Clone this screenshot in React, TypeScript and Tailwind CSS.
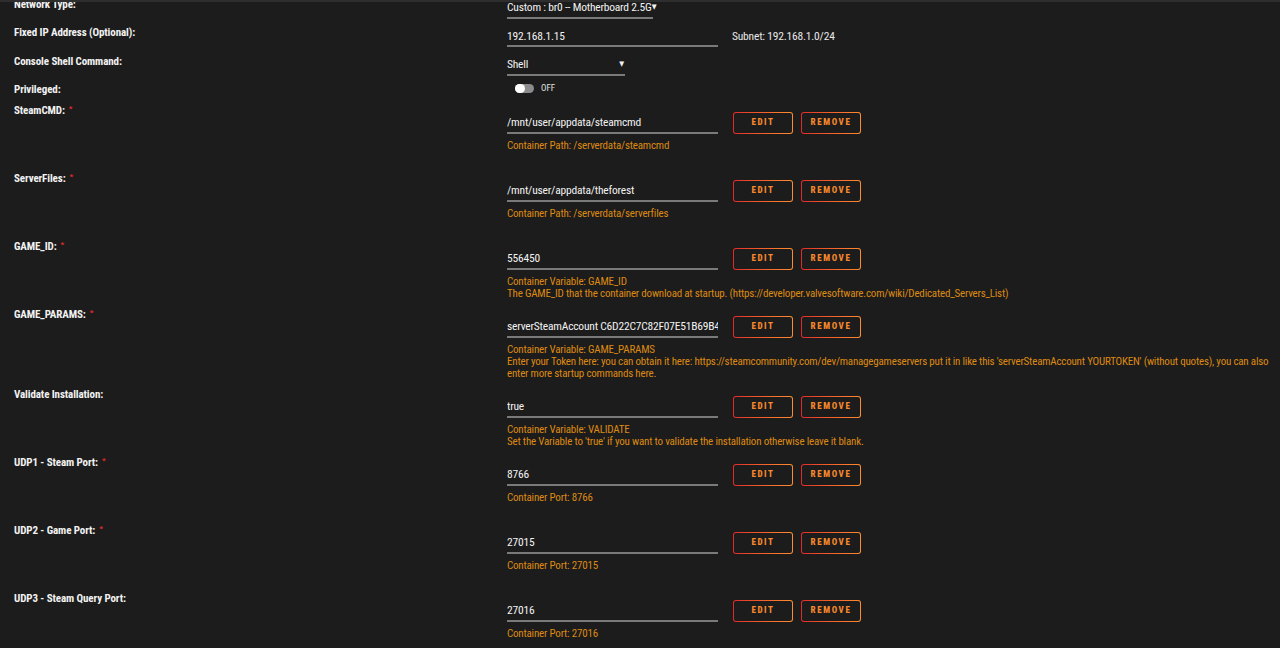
import React from "react";

type Row = {
  label: string;
  req: boolean;
  value: string;
  desc: string[];
};

const rows: Row[] = [
  { label: "SteamCMD:", req: true, value: "/mnt/user/appdata/steamcmd", desc: ["Container Path: /serverdata/steamcmd"] },
  { label: "ServerFiles:", req: true, value: "/mnt/user/appdata/theforest", desc: ["Container Path: /serverdata/serverfiles"] },
  {
    label: "GAME_ID:",
    req: true,
    value: "556450",
    desc: [
      "Container Variable: GAME_ID",
      "The GAME_ID that the container download at startup. (https://developer.valvesoftware.com/wiki/Dedicated_Servers_List)",
    ],
  },
  {
    label: "GAME_PARAMS:",
    req: true,
    value: "serverSteamAccount C6D22C7C82F07E51B69B4F3A1D5E9C27",
    desc: [
      "Container Variable: GAME_PARAMS",
      "Enter your Token here: you can obtain it here: https://steamcommunity.com/dev/managegameservers put it in like this 'serverSteamAccount YOURTOKEN' (without quotes), you can also enter more startup commands here.",
    ],
  },
  {
    label: "Validate Installation:",
    req: false,
    value: "true",
    desc: [
      "Container Variable: VALIDATE",
      "Set the Variable to 'true' if you want to validate the installation otherwise leave it blank.",
    ],
  },
  { label: "UDP1 - Steam Port:", req: true, value: "8766", desc: ["Container Port: 8766"] },
  { label: "UDP2 - Game Port:", req: true, value: "27015", desc: ["Container Port: 27015"] },
  { label: "UDP3 - Steam Query Port:", req: false, value: "27016", desc: ["Container Port: 27016"] },
];

function Label({ text, req }: { text: string; req?: boolean }) {
  return (
    <div className="w-[507px] flex-none pl-[14px] text-[11px] leading-[12px] font-bold tracking-[-0.1px] text-[#f2f2f2]">
      {text}
      {req && <span className="ml-[4px] align-top text-[8px] leading-[8px] text-[#e22828]">*</span>}
    </div>
  );
}

function Btn({ text }: { text: string }) {
  return (
    <div className="h-[22px] w-[60px] rounded-[3px] bg-gradient-to-r from-[#e22828] to-[#ff8c2f] p-px">
      <div className="flex h-full w-full items-center justify-center rounded-[2px] bg-[#1c1c1c] text-[9px] font-extrabold tracking-[1.6px] text-[#f7882c]">
        {text}
      </div>
    </div>
  );
}

function ConfigRow({ r }: { r: Row }) {
  return (
    <div className="flex pb-[9px]">
      <Label text={r.label} req={r.req} />
      <div className="flex-1 pr-[6px]">
        <div className="mt-[7px] flex items-start">
          <div className="w-[211px] overflow-hidden whitespace-nowrap border-b-2 border-[#7a7a7a] pt-[4px] pb-[4px] text-[11.5px] leading-[12px] tracking-[-0.2px] text-[#f2f2f2]">
            {r.value}
          </div>
          <div className="ml-[15px] flex gap-[8px]">
            <Btn text="EDIT" />
            <Btn text="REMOVE" />
          </div>
        </div>
        <div className="mt-[6px] min-h-[24px] text-[11px] leading-[12px] tracking-[-0.2px] text-[#dc8a12]">
          {r.desc.map((d, i) => (
            <div key={i}>{d}</div>
          ))}
        </div>
      </div>
    </div>
  );
}

export default function App() {
  return (
    <div className="h-[648px] w-[1280px] overflow-hidden border-t-2 border-[#2e2e2e] bg-[#1c1c1c] [font-family:'Liberation_Sans_Narrow','Roboto_Condensed','DejaVu_Sans_Condensed',sans-serif]">
      <div className="-mt-[3px]">
        {/* Network Type */}
        <div className="flex h-[28px] items-start">
          <Label text="Network Type:" />
          <div className="pt-[2px]">
            <div className="flex w-[146px] items-center justify-between whitespace-nowrap border-b-2 border-[#7a7a7a] pb-[4px] text-[11.5px] leading-[12px] tracking-[-0.2px] text-[#f2f2f2]">
              <span>Custom : br0 -- Motherboard 2.5G</span>
              <span className="text-[7px]">▼</span>
            </div>
          </div>
        </div>
        {/* Fixed IP */}
        <div className="flex h-[29px] items-start">
          <Label text="Fixed IP Address (Optional):" />
          <div className="flex items-start pt-[3px]">
            <div className="w-[211px] border-b-2 border-[#7a7a7a] pb-[3px] text-[11.5px] leading-[12px] tracking-[-0.2px] text-[#f2f2f2]">
              192.168.1.15
            </div>
            <div className="ml-[14px] text-[11.5px] leading-[12px] tracking-[-0.2px] text-[#e8e8e8]">Subnet: 192.168.1.0/24</div>
          </div>
        </div>
        {/* Console Shell */}
        <div className="flex h-[28px] items-start">
          <Label text="Console Shell Command:" />
          <div className="pt-[2px]">
            <div className="flex w-[118px] items-center justify-between border-b-2 border-[#7a7a7a] pb-[4px] text-[11.5px] leading-[12px] tracking-[-0.2px] text-[#f2f2f2]">
              <span>Shell</span>
              <span className="pr-[1px] text-[7px]">▼</span>
            </div>
          </div>
        </div>
        {/* Privileged */}
        <div className="flex h-[21px] items-start">
          <Label text="Privileged:" />
          <div className="flex items-center">
            <div className="ml-[8px] flex h-[9px] w-[19px] items-center rounded-full bg-[#8c8c8c]">
              <div className="h-[9px] w-[10px] rounded-full bg-white" />
            </div>
            <span className="ml-[7px] text-[9px] leading-[9px] text-[#e0e0e0]">OFF</span>
          </div>
        </div>
        {rows.map((r, i) => (
          <ConfigRow key={i} r={r} />
        ))}
      </div>
    </div>
  );
}
